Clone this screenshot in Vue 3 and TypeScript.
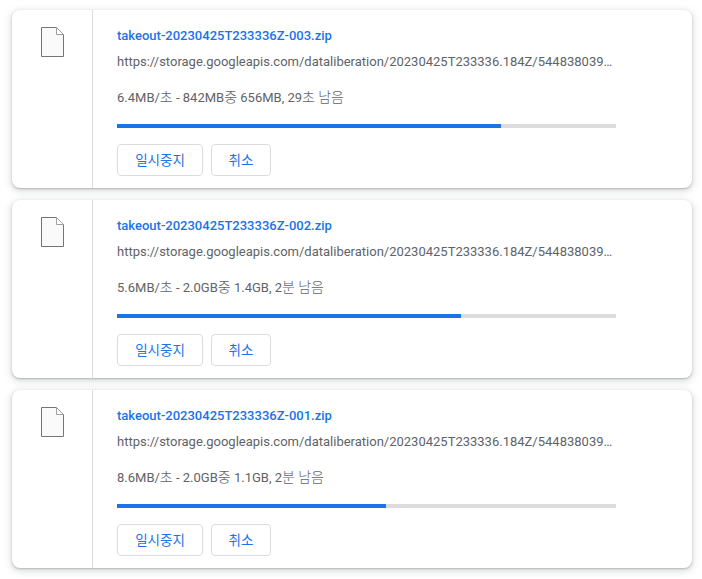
<script setup lang="ts">
interface Download {
  name: string;
  status: string;
  progress: number;
}

const url = 'https://storage.googleapis.com/dataliberation/20230425T233336.184Z/544838039…';

const downloads: Download[] = [
  { name: 'takeout-20230425T233336Z-003.zip', status: '6.4MB/초 - 842MB중 656MB, 29초 남음', progress: 384 },
  { name: 'takeout-20230425T233336Z-002.zip', status: '5.6MB/초 - 2.0GB중 1.4GB, 2분 남음', progress: 344 },
  { name: 'takeout-20230425T233336Z-001.zip', status: '8.6MB/초 - 2.0GB중 1.1GB, 2분 남음', progress: 269 },
];

// hangul runs are set a bit larger, the latin parts stay as they are
const splitHangul = (text: string): string[] => text.split(/([가-힣]+)/).filter(Boolean);
const isHangul = (part: string): boolean => /[가-힣]/.test(part);
</script>

<template>
  <main class="list">
    <section v-for="item in downloads" :key="item.name" class="card">
      <div class="icon-col">
        <svg class="file-icon" width="23" height="30" viewBox="0 0 23 30">
          <path d="M.5.5H15.5L22.5 7.5V29.5H.5Z" fill="#fafafa" stroke="#757575" />
          <path d="M15.5.5L22.5 7.5H15.5Z" fill="#fff" stroke="#9e9e9e" />
        </svg>
      </div>
      <div class="details">
        <a class="name" href="#">{{ item.name }}</a>
        <div class="url">{{ url }}</div>
        <div class="status">
          <span
            v-for="(part, i) in splitHangul(item.status)"
            :key="i"
            :class="{ ko: isHangul(part) }"
          >{{ part }}</span>
        </div>
        <div class="track">
          <div class="bar" :style="{ width: item.progress + 'px' }"></div>
        </div>
        <div class="actions">
          <button class="btn pause">일시중지</button>
          <button class="btn cancel">취소</button>
        </div>
      </div>
    </section>
  </main>
</template>

<style>
body {
  background: #fff;
}
</style>

<style scoped>
.list {
  display: flex;
  flex-direction: column;
  gap: 12px;
  width: 680px;
  margin-left: 12px;
  padding: 10px 0 11px;
  font-family: Roboto, "Noto Sans CJK KR", sans-serif;
  font-size: 13px;
}
.card {
  display: flex;
  height: 178px;
  background: #fff;
  border-radius: 8px;
  box-shadow: 0 1px 2px 0 rgba(60, 64, 67, 0.3), 0 2px 6px 2px rgba(60, 64, 67, 0.15);
}
.icon-col {
  flex: none;
  width: 81px;
  padding: 17px 0 0 29px;
  border-right: 1px solid #dadce0;
  box-sizing: border-box;
}
.file-icon {
  display: block;
}
.details {
  padding: 17px 0 0 24px;
  width: 499px;
}
.name {
  display: block;
  height: 18px;
  line-height: 18px;
  font-weight: 500;
  color: #1a73e8;
  text-decoration: none;
}
.url {
  margin-top: 8px;
  height: 18px;
  line-height: 18px;
  color: #5f6368;
  white-space: nowrap;
}
.status {
  margin-top: 18px;
  height: 18px;
  line-height: 18px;
  color: #5f6368;
}
.ko {
  font-size: 14px;
  line-height: 1;
  font-weight: 300;
}
.track {
  margin-top: 17px;
  height: 4px;
  background: #dcdcdc;
}
.bar {
  height: 100%;
  background: #1a73e8;
}
.actions {
  display: flex;
  gap: 8px;
  margin-top: 16px;
}
.btn {
  height: 32px;
  padding: 0 0 2px;
  background: #fff;
  border: 1px solid #dadce0;
  border-radius: 4px;
  color: #1a73e8;
  font: inherit;
  font-size: 13.5px;
}
.pause {
  width: 86px;
}
.cancel {
  width: 60px;
}
</style>
